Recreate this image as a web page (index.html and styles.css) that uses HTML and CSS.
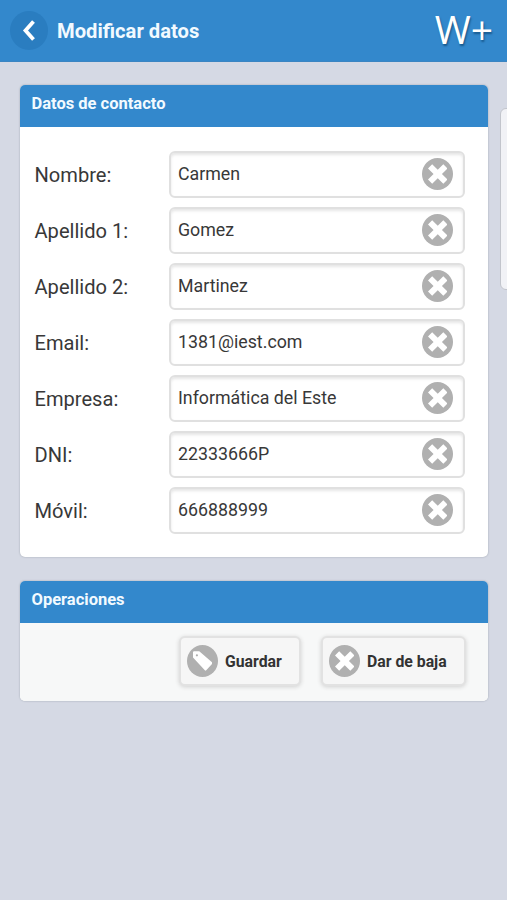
FILE: index.html
```html
<!DOCTYPE html>
<html lang="es">
<head>
<meta charset="utf-8">
<title>Modificar datos</title>
<link rel="stylesheet" href="styles.css">
</head>
<body>
<svg class="defs" width="0" height="0" aria-hidden="true">
<symbol id="delete" viewBox="0 0 14 14"><path d="M14 3 11 0 7 4 3 0 0 3 4 7 0 11 3 14 7 10 11 14 14 11 10 7z"/></symbol>
<symbol id="tag" viewBox="0 0 14 14"><path d="M4.500 0H.8Q0 0 0 .8V4.500l8.500 9.200q.5.500 1 0l4.200-4.700q.5-.5 0-1zM2.800 3.700a.8.8 0 1 1 0-1.600.8.8 0 0 1 0 1.600z"/></symbol>
</svg>
<header class="topbar">
<a class="back"><svg width="14" height="21" viewBox="0 0 14 21"><path d="M11.500 1.500 3.500 10.500l8 9"/></svg></a>
<h1 class="title">Modificar datos</h1>
<span class="brand">W+</span>
</header>
<main class="content">
<section class="card">
<h2 class="card-title">Datos de contacto</h2>
<div class="fields">
<div class="row"><span class="label">Nombre:</span><div class="input"><span>Carmen</span><i class="disc"><svg><use href="#delete"/></svg></i></div></div>
<div class="row"><span class="label">Apellido 1:</span><div class="input"><span>Gomez</span><i class="disc"><svg><use href="#delete"/></svg></i></div></div>
<div class="row"><span class="label">Apellido 2:</span><div class="input"><span>Martinez</span><i class="disc"><svg><use href="#delete"/></svg></i></div></div>
<div class="row"><span class="label">Email:</span><div class="input"><span>1381@iest.com</span><i class="disc"><svg><use href="#delete"/></svg></i></div></div>
<div class="row"><span class="label">Empresa:</span><div class="input"><span>Informática del Este</span><i class="disc"><svg><use href="#delete"/></svg></i></div></div>
<div class="row"><span class="label">DNI:</span><div class="input"><span>22333666P</span><i class="disc"><svg><use href="#delete"/></svg></i></div></div>
<div class="row"><span class="label">Móvil:</span><div class="input"><span>666888999</span><i class="disc"><svg><use href="#delete"/></svg></i></div></div>
</div>
</section>
<section class="card">
<h2 class="card-title">Operaciones</h2>
<div class="actions">
<a class="button save"><i class="disc"><svg><use href="#tag"/></svg></i>Guardar</a>
<a class="button remove"><i class="disc"><svg><use href="#delete"/></svg></i>Dar de baja</a>
</div>
</section>
</main>
<div class="side-panel"></div>
</body>
</html>
```
FILE: styles.css
```css
* { box-sizing: border-box; }
body {
  margin: 0;
  height: 900px;
  position: relative;
  overflow: hidden;
  background: #d5d9e4;
  color: #383838;
  font-family: Roboto, sans-serif;
}
.defs { position: absolute; }
.topbar {
  height: 62px;
  display: flex;
  align-items: center;
  padding: 0 14px 0 10px;
  background: #3388cc;
  border-bottom: 1px solid #3b85c2;
  color: #f2faff;
}
.back {
  width: 38px;
  height: 39px;
  border-radius: 50%;
  background: #2a7dc0;
  display: flex;
  align-items: center;
  justify-content: center;
  padding-right: 1px;
}
.back path { fill: none; stroke: #fff; stroke-width: 3.8; }
.title { margin: 0 0 0 9px; font-size: 20.2px; font-weight: 700; line-height: 24px; }
.brand {
  margin-left: auto;
  margin-top: -4px;
  font: 39px/40px "Open Sans", sans-serif;
  color: #fff;
  text-shadow: 1px 2px 2px #17588c;
}
.content { padding: 23px 19px 0 20px; }
.card {
  margin-bottom: 24px;
  border-radius: 5px;
  background: #fff;
  box-shadow: 0 0 2px #9aa0aa;
  overflow: hidden;
}
.card-title {
  margin: 0;
  height: 42px;
  padding: 0 11.5px;
  background: #3388cc;
  color: #f2faff;
  font-size: 16.5px;
  font-weight: 700;
  line-height: 38px;
}
.fields { padding: 24px 23px 22px 14.5px; height: 430px; display: grid; gap: 8px; }
.row { display: grid; grid-template-columns: 134.5px 1fr; height: 48px; }
.label { font-size: 20.1px; line-height: 48px; }
.input {
  height: 47px;
  display: flex;
  align-items: center;
  justify-content: space-between;
  padding: 0 10px 0 7px;
  border: 2px solid #e0e0e0;
  border-radius: 6px;
  background: #fff;
  box-shadow: inset 0 2px 3px #e6e6e6;
  font-size: 17.8px;
}
.input span { margin-top: -3px; }
.input .disc { margin-top: -2px; }
.disc {
  width: 31px;
  height: 32px;
  border-radius: 50%;
  background: #b0b0b0;
  display: flex;
  align-items: center;
  justify-content: center;
}
.disc svg { width: 19.5px; height: 20px; fill: #fff; }
.actions { height: 78px; display: flex; justify-content: flex-end; gap: 20px; padding: 13px 22px 0 0; background: #f7f8f8; }
.button {
  height: 50px;
  display: flex;
  align-items: center;
  gap: 7px;
  padding-left: 6px;
  border: 2px solid #e2e2e2;
  border-radius: 6px;
  background: #f6f6f6;
  box-shadow: 0 1px 4px #d0d0d0;
  font-size: 15.8px;
  font-weight: 700;
  color: #333;
}
.save { width: 122px; }
.remove { width: 145px; }
.side-panel {
  position: absolute;
  left: 500px;
  top: 108px;
  width: 20px;
  height: 182px;
  border: 1px solid #c2c5cc;
  border-radius: 6px;
  background: #f1f2f6;
}
```
